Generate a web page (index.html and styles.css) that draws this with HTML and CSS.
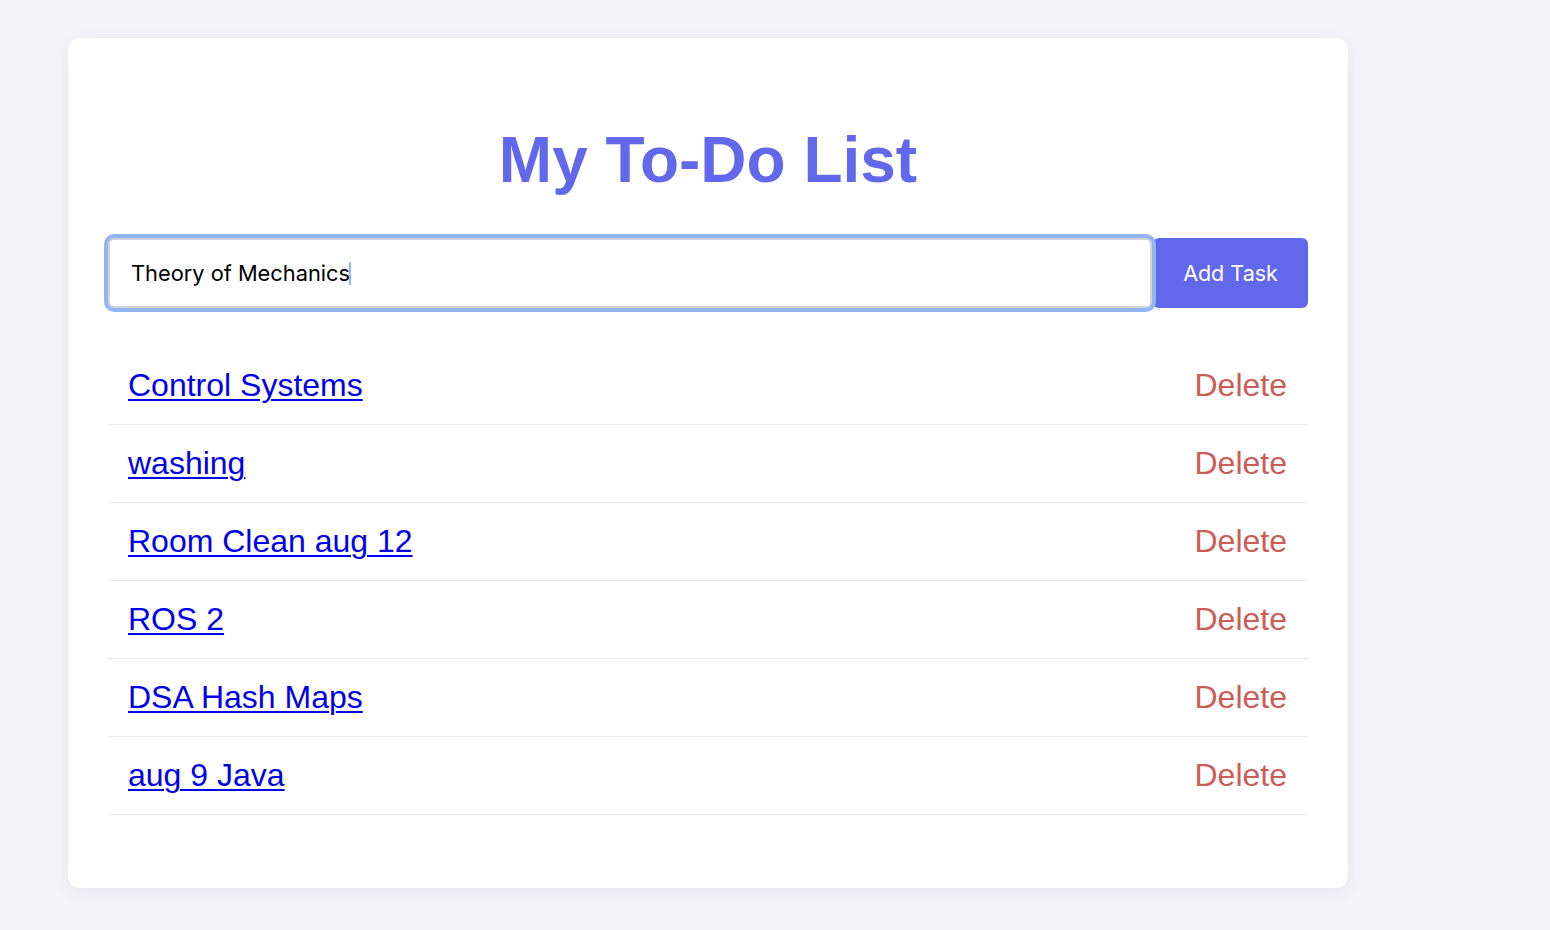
FILE: index.html
```html
<!DOCTYPE html>
<html lang="en">
<head>
<meta charset="utf-8">
<title>My To-Do List</title>
<link rel="stylesheet" href="styles.css">
</head>
<body>
<main class="card">
  <h1 class="title">My To-Do List</h1>
  <form class="add-form" onsubmit="return false;">
    <div class="input-wrap">
      <input class="task-input" type="text" value="Theory of Mechanics"><span class="caret"></span>
    </div>
    <button class="add-btn" type="submit">Add Task</button>
  </form>
  <ul class="task-list">
    <li class="task"><a class="task-link" href="#">Control Systems</a><span class="delete">Delete</span></li>
    <li class="task"><a class="task-link" href="#">washing</a><span class="delete">Delete</span></li>
    <li class="task"><a class="task-link" href="#">Room Clean aug 12</a><span class="delete">Delete</span></li>
    <li class="task"><a class="task-link" href="#">ROS 2</a><span class="delete">Delete</span></li>
    <li class="task"><a class="task-link" href="#">DSA Hash Maps</a><span class="delete">Delete</span></li>
    <li class="task"><a class="task-link" href="#">aug 9 Java</a><span class="delete">Delete</span></li>
  </ul>
</main>
</body>
</html>
```

FILE: styles.css
```css
html, body {
  margin: 0;
  padding: 0;
  background: #f4f4f8;
}
body {
  padding: 38px 0 0 68px;
  font-family: "Liberation Sans", Arial, sans-serif;
  min-height: 930px;
  box-sizing: border-box;
}
.card {
  width: 1280px;
  box-sizing: border-box;
  background: #ffffff;
  border-radius: 12px;
  box-shadow: 0 4px 20px rgba(40, 40, 80, 0.08);
  padding: 40px 40px 40px;
}
.title {
  font-size: 64px;
  font-weight: 700;
  color: #6268ec;
  text-align: center;
  margin: 46px 0 42px;
  line-height: 72px;
}
.add-form {
  display: flex;
  height: 70px;
}
.input-wrap {
  flex: 1;
  position: relative;
  display: flex;
}
.task-input {
  flex: 1;
  height: 70px;
  box-sizing: border-box;
  border: 2px solid #d4d4d8;
  border-radius: 6px;
  padding: 0 20px 0 21px;
  font-family: Inter, "Noto Sans", sans-serif;
  font-size: 21.8px;
  letter-spacing: 0;
  color: #000;
  outline: none;
  box-shadow: 0 0 0 4px #95b4f4;
  margin-right: 1px;
}
.caret {
  position: absolute;
  left: 241px;
  top: 24px;
  width: 2px;
  height: 23px;
  background: #95b4f4;
}
.add-btn {
  width: 155px;
  height: 70px;
  border: none;
  border-radius: 6px;
  background: #6268ec;
  color: #ffffff;
  font-family: Inter, "Noto Sans", sans-serif;
  font-size: 21.5px;
  cursor: pointer;
}
.task-list {
  list-style: none;
  margin: 39px 0 33px;
  padding: 0;
}
.task {
  display: flex;
  justify-content: space-between;
  align-items: center;
  padding: 20px 21px 20px 20px;
  border-bottom: 1px solid #eaeaea;
  font-size: 32px;
  line-height: 37px;
}
.task-link {
  color: #0000ee;
  text-decoration: underline;
  text-underline-offset: 3px;
  text-decoration-thickness: 2px;
}
.delete {
  color: #cd5c57;
  cursor: pointer;
}
```
